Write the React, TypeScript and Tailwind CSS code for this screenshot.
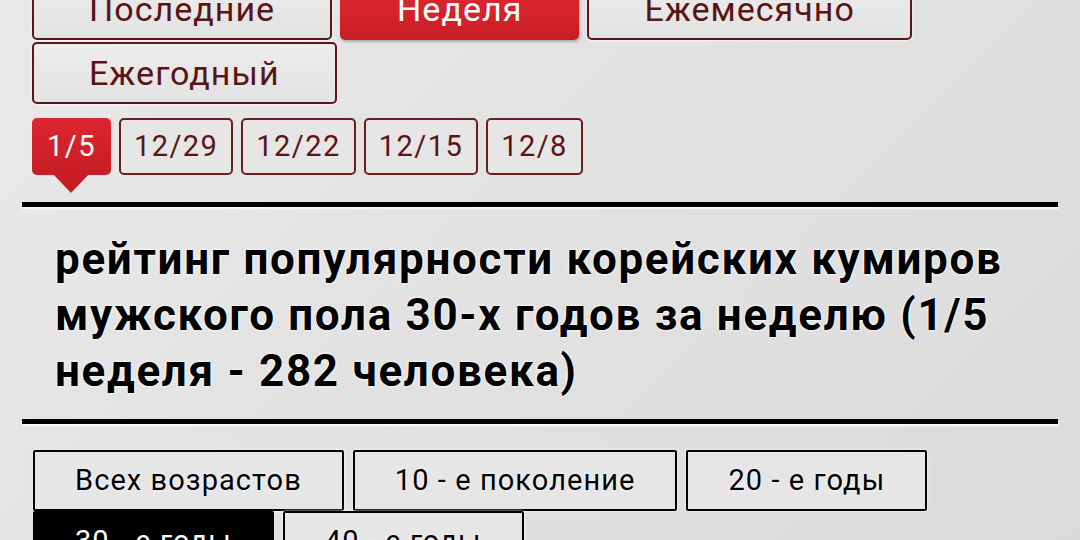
import React from "react";

const periods = [
  { label: "Последние", active: false },
  { label: "Неделя", active: true },
  { label: "Ежемесячно", active: false },
  { label: "Ежегодный", active: false },
];

const dates = [
  { label: "1/5", active: true },
  { label: "12/29", active: false },
  { label: "12/22", active: false },
  { label: "12/15", active: false },
  { label: "12/8", active: false },
];

const ages = [
  { label: "Всех возрастов", active: false },
  { label: "10 - е поколение", active: false },
  { label: "20 - е годы", active: false },
  { label: "30 - е годы", active: true },
  { label: "40 - е годы", active: false },
];

export default function App() {
  return (
    <div
      className="relative h-[540px] w-[1080px] overflow-hidden bg-[linear-gradient(135deg,#e9e9e9_0%,#e2e2e2_45%,#dbdbdb_100%)]"
      style={{ fontFamily: "Roboto, 'Noto Sans', sans-serif" }}
    >
      {/* period buttons */}
      <div className="-mt-[22px] flex flex-wrap gap-x-[8px] gap-y-[2px] pl-[32px] pr-[20px]">
        {periods.map((p) =>
          p.active ? (
            <div
              key={p.label}
              className="flex h-[62px] items-center rounded-[5px] bg-[linear-gradient(180deg,#e42a33_0%,#c91d25_100%)] px-[57px] text-[34px] tracking-[0.03em] text-white shadow-[1px_2px_3px_rgba(0,0,0,0.25)]"
            >
              {p.label}
            </div>
          ) : (
            <div
              key={p.label}
              className="flex h-[62px] items-center rounded-[5px] border-2 border-[#5a1717] bg-[linear-gradient(180deg,#ececec_0%,#e3e3e3_100%)] px-[55px] text-[34px] tracking-[0.03em] text-[#5a1414] shadow-[0_1px_2px_rgba(255,255,255,0.8)]"
            >
              {p.label}
            </div>
          )
        )}
      </div>

      {/* date tabs */}
      <div className="mt-[14px] flex gap-[8px] pl-[32px]">
        {dates.map((d) =>
          d.active ? (
            <div key={d.label} className="relative">
              <div className="flex h-[57px] items-center rounded-[5px] bg-[linear-gradient(180deg,#dc2630_0%,#c81d25_100%)] px-[15px] text-[29px] tracking-[0.05em] text-white">
                {d.label}
              </div>
              <div className="absolute left-1/2 top-[56px] h-0 w-0 -translate-x-1/2 border-l-[18px] border-r-[18px] border-t-[19px] border-l-transparent border-r-transparent border-t-[#c81d25]" />
            </div>
          ) : (
            <div
              key={d.label}
              className="flex h-[57px] items-center rounded-[5px] border-2 border-[#6a1f1f] bg-[#e6e6e6] px-[13px] text-[29px] tracking-[0.05em] text-[#5a1414]"
            >
              {d.label}
            </div>
          )
        )}
      </div>

      {/* top rule */}
      <div className="mx-[22px] mt-[27px] h-[5px] bg-black shadow-[0_2px_2px_rgba(255,255,255,0.9)]" />

      {/* title */}
      <h1 className="mt-[24px] pl-[55px] pr-[40px] text-[44px] font-bold leading-[56px] tracking-[0.038em] text-black [text-shadow:0_0_3px_#fff,0_0_2px_#fff]">
        рейтинг популярности корейских кумиров мужского пола 30-х годов за неделю (1/5 неделя - 282 человека)
      </h1>

      {/* bottom rule */}
      <div className="mx-[22px] mt-[20px] h-[5px] bg-black shadow-[0_2px_2px_rgba(255,255,255,0.9)]" />

      {/* age buttons */}
      <div className="mt-[26px] flex flex-wrap gap-x-[9px] gap-y-0 pl-[33px] pr-[20px]">
        {ages.map((a) =>
          a.active ? (
            <div
              key={a.label}
              className="flex h-[61px] items-center rounded-[2px] border-2 border-black bg-black px-[40px] text-[29px] tracking-[0.037em] text-white"
            >
              {a.label}
            </div>
          ) : (
            <div
              key={a.label}
              className="flex h-[61px] items-center rounded-[2px] border-2 border-black bg-[#e6e6e6] px-[40px] text-[29px] tracking-[0.037em] text-black shadow-[0_0_3px_#fff] [text-shadow:0_0_3px_#fff]"
            >
              {a.label}
            </div>
          )
        )}
      </div>
    </div>
  );
}
